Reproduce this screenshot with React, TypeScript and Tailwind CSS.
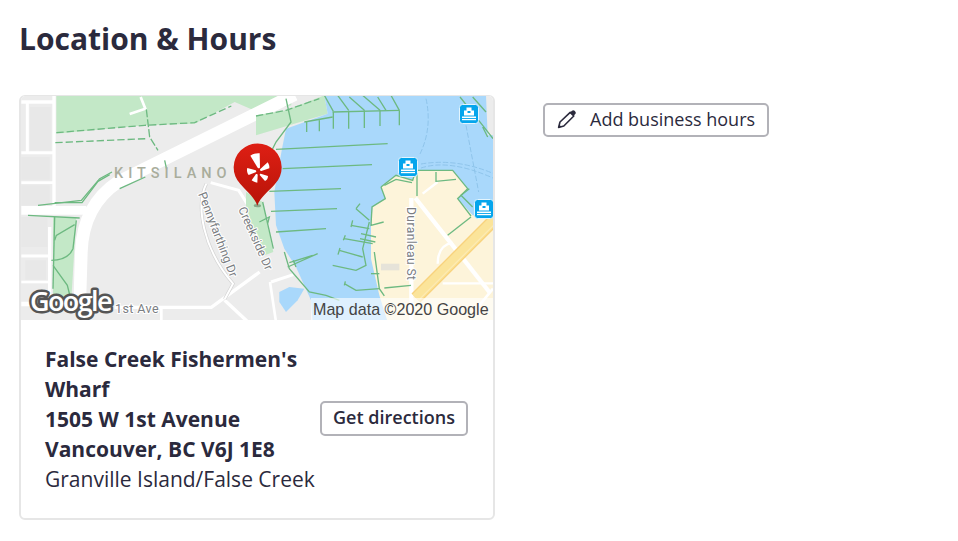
function MapArt() {
  const green = "#6db981";
  return (
    <svg viewBox="21 96 472 224" className="block h-[224px] w-[472px]" xmlns="http://www.w3.org/2000/svg">
      <rect x="20" y="96" width="473" height="224" fill="#ececec" />
      {/* West half */}
      <g transform="translate(18 92) scale(0.33333)" fill="none">
        <path d="M115 10 H820 V40 L720 60 L650 30 L530 95 L380 100 L115 125 Z" fill="#c3e8c7" />
        <path d="M105 375 H175 L160 620 H105 Z" fill="#c3e8c7" />
        <rect x="36" y="45" width="62" height="130" fill="#e8e8e8" />
        <rect x="10" y="195" width="85" height="68" fill="#e8e8e8" />
        <rect x="10" y="280" width="85" height="60" fill="#e8e8e8" />
        <rect x="10" y="375" width="78" height="90" fill="#e8e8e8" />
        <rect x="22" y="505" width="62" height="58" fill="#e8e8e8" />
        <g stroke="#ffffff">
          <path d="M108 10 V345" strokeWidth="10" />
          <path d="M95 405 V640" strokeWidth="10" />
          <path d="M10 30 H108" strokeWidth="11" />
          <path d="M28 30 V180" strokeWidth="9" />
          <path d="M10 182 H105" strokeWidth="9" />
          <path d="M10 272 H105" strokeWidth="8" />
          <path d="M10 492 H95" strokeWidth="9" />
          <path d="M10 570 H95" strokeWidth="8" />
          <path d="M10 355 H205" strokeWidth="26" />
          <path d="M10 636 H200" strokeWidth="13" />
          <path d="M830 8 L300 270 Q195 340 190 480 L185 640" strokeWidth="38" />
          <path d="M290 646 H580 L725 540" strokeWidth="10" />
          <path d="M578 272 L662 295 L700 355" strokeWidth="9" />
          <path d="M335 66 L382 50 L368 15" strokeWidth="8" />
          <path d="M620 625 L690 690" strokeWidth="10" />
          <path d="M430 650 V690" strokeWidth="8" />
        </g>
        <path d="M565 275 C532 340 555 470 645 575 L620 622" stroke="#d3d3d3" strokeWidth="10" />
        <path d="M565 275 C532 340 555 470 645 575 L620 622" stroke="#ffffff" strokeWidth="6" />
        <g stroke={green} strokeWidth="4">
          <path d="M115 122 L380 100 L530 92 L640 42" strokeDasharray="22 9" />
          <path d="M112 152 L385 140" strokeDasharray="22 9" />
          <path d="M385 52 L395 135 L420 175" strokeDasharray="24 6" />
          <path d="M440 205 L446 232" />
          <path d="M282 240 L245 260 L190 325 L60 340" />
          <path d="M275 248 L240 268 L192 332 L110 332" />
          <path d="M305 290 L382 255" />
          <path d="M30 370 L185 378" />
          <path d="M110 375 L105 590" />
          <path d="M175 385 L165 470 Q150 505 100 505" />
          <path d="M170 398 L115 430 L110 445" />
          <path d="M105 520 L148 580 L156 612" />
        </g>
      </g>
      {/* East half */}
      <g transform="translate(256 92) scale(0.33333)" fill="none">
        <path d="M0 70 L90 55 L205 10 L215 65 L100 100 L0 130 Z" fill="#c3e8c7" />
        <path d="M-30 300 L20 330 L52 480 L20 492 L0 440 L-30 370 Z" fill="#c3e8c7" />
        <path d="M205 10 H690 L695 130 H711 V420 L660 690 H170 L165 625 L120 525 L85 470 L60 400 L55 300 L78 170 L90 110 L215 65 Z" fill="#a9d8fb" />
        <path d="M70 600 L100 585 L145 590 L125 625 L90 660 L70 630 Z" fill="#a9d8fb" />
        <path d="M420 250 L470 265 L480 235 L590 235 L635 290 L605 320 L650 370 L711 380 V690 H395 L370 610 L345 500 L345 400 L350 345 L388 320 L375 285 Z" fill="#fdf4da" />
        <rect x="375" y="515" width="55" height="20" fill="#e6e3d9" />
        <g stroke="#ffffff">
          <path d="M478 318 L700 600" strokeWidth="13" />
          <path d="M466 318 V690" strokeWidth="13" />
          <path d="M500 305 L545 270" strokeWidth="7" />
          <path d="M545 515 Q545 460 590 452" strokeWidth="7" />
          <path d="M560 574 H711" strokeWidth="7" />
          <path d="M45 570 L112 548" strokeWidth="9" />
          <path d="M42 570 L60 690" strokeWidth="8" />
          <path d="M711 590 L670 640" strokeWidth="8" />
        </g>
        <path d="M720 378 L480 618" stroke="#f8d27c" strokeWidth="38" />
        <path d="M720 378 L480 618" stroke="#fbe49a" strokeWidth="30" />
        <path d="M720 392 L492 620" stroke="#fdf2d5" strokeWidth="2" />
        <g stroke="#8fc4ea" strokeWidth="3" strokeDasharray="16 6">
          <path d="M510 20 Q530 110 490 190" />
          <path d="M630 100 L668 300" />
          <path d="M495 228 Q580 200 711 258" />
          <path d="M495 216 Q600 198 711 244" />
        </g>
        <g stroke={green} strokeWidth="4">
          <path d="M230 60 L430 55" />
          <path d="M232 60 V110 M278 56 V110 M325 55 V108 M372 55 V102 M430 55 V100" />
          <path d="M205 10 L232 58 M245 10 L278 55 M280 15 L325 55 M320 10 L372 55 M365 15 L390 55 M405 10 L430 55" />
          <path d="M145 90 L230 75 M152 90 V120 M190 82 V118" />
          <path d="M60 172 L395 155 M80 230 L348 218 M40 298 L255 290 M45 358 L243 350 M60 420 L210 410" />
          <path d="M90 20 L105 90 L60 150 L45 180" />
          <path d="M0 72 L90 55 L190 20" strokeDasharray="22 8" />
          <path d="M20 330 L52 470 M10 390 L40 375 L35 395" />
          <path d="M85 480 L100 530 L160 600 L210 610 L250 625" />
          <path d="M95 525 L185 485 M100 512 L170 490 M120 525 L112 505" />
          <path d="M300 350 L340 385 M312 335 L300 350 M285 400 L340 410 M290 385 L285 405 M265 440 L350 455 M268 430 L262 445" />
          <path d="M315 425 L360 435 M312 440 L358 450" />
          <path d="M250 475 L320 495 M252 468 L246 488 M230 520 L300 535 L330 520 L320 470 L340 390" />
          <path d="M265 575 L300 595 L370 590 M268 568 L265 580" />
          <path d="M345 545 H370" />
          <path d="M375 285 L420 250 L470 265 L480 235 L590 235 L635 290 L605 320 L645 372" />
          <path d="M385 280 L420 262 L468 272" />
          <path d="M483 235 V312" />
          <path d="M375 285 L388 320 L348 345 L345 400 L383 390" />
          <path d="M355 480 L370 590 L385 612" />
          <path d="M385 588 L465 580" />
          <path d="M575 430 L645 375" />
          <path d="M540 240 V268 L600 262" />
          <path d="M650 345 L615 310 L640 290" />
          <path d="M612 15 L680 100 L711 140 M650 15 L690 60 M680 105 L695 135" />
        </g>
      </g>
      {/* Ferry icons */}
      {[[469, 114], [408, 167], [484, 209]].map(([x, y]) => (
        <g key={x} transform={`translate(${x} ${y})`}>
          <rect x="-9.5" y="-9.5" width="19" height="19" rx="3" fill="#05a5ec" stroke="#e3f5fe" strokeWidth="1" />
          <path d="M-2.5 -6.5 H2.5 V-3.5 H5 V1.5 H-5 V-3.5 H-2.5 Z" fill="#ffffff" />
          <rect x="-1.5" y="-3" width="3" height="2" fill="#05a5ec" />
          <rect x="-7" y="2.5" width="14" height="1.6" fill="#ffffff" />
          <rect x="-7" y="5" width="14" height="1.2" fill="#ffffff" />
        </g>
      ))}
      {/* Labels */}
      <text x="114" y="178" fontFamily="Roboto, sans-serif" fontSize="14.5" letterSpacing="5" fill="#a9ad9c" fontWeight="500">KITSILANO</text>
      <g fontFamily="Roboto, sans-serif" fontSize="12" fill="#7a7d82">
        <text transform="translate(198 194) rotate(69)" stroke="#ffffff" strokeWidth="2" paintOrder="stroke">Pennyfarthing Dr</text>
        <text transform="translate(238 209) rotate(66)" stroke="#ffffff" strokeWidth="2" paintOrder="stroke">Creekside Dr</text>
        <text transform="translate(407 207) rotate(90)" stroke="#ffffff" strokeWidth="2" paintOrder="stroke" letterSpacing="0.45">Duranleau St</text>
      </g>
      {/* Attribution */}
      <rect x="311" y="298" width="182" height="22" fill="#ffffff" fillOpacity="0.62" />
      <text x="313" y="314.5" fontFamily="'Liberation Sans', Arial, sans-serif" fontSize="16.1" fill="#444444">Map data ©2020 Google</text>
      {/* Google logo */}
      <text x="30" y="311" fontFamily="'Open Sans', sans-serif" fontSize="27" fontWeight="600" letterSpacing="-1.6" fill="#ffffff" stroke="#555555" strokeWidth="5" paintOrder="stroke" strokeLinejoin="round">Google</text>
      <text x="115" y="313" fontFamily="Roboto, sans-serif" fontSize="12.5" letterSpacing="0.4" fill="#7a7d82" stroke="#ffffff" strokeWidth="2" paintOrder="stroke">1st Ave</text>
      {/* Pin */}
      <g transform="translate(225 135) scale(0.33333)">
        <defs>
          <linearGradient id="pinfill" x1="0" y1="0" x2="0" y2="1">
            <stop offset="0" stopColor="#de1f14" />
            <stop offset="1" stopColor="#b81408" />
          </linearGradient>
        </defs>
        <ellipse cx="97" cy="212" rx="11" ry="5" fill="#5f7f5f" fillOpacity="0.6" />
        <path d="M97 212 C90 188 62 166 46 147 A72 72 0 1 1 150 147 C134 166 104 188 97 212 Z" fill="url(#pinfill)" />
        <g fill="#ffffff">
          <path d="M76 62 C82 56 96 54 104 55 L105 96 C105 100 101 101 98 98 Z" />
          <path d="M67 99 L92 106 C95 108 94 111 92 112 L71 120 C66 115 65 105 67 99 Z" />
          <path d="M128 82 C132 88 134 94 133 100 L109 108 C105 108 104 104 106 102 Z" />
          <path d="M93 117 C96 116 98 118 98 120 L97 143 C91 143 85 140 80 136 Z" />
          <path d="M107 116 L129 123 C129 130 125 136 120 138 L104 120 C104 118 105 116 107 116 Z" />
        </g>
      </g>
    </svg>
  );
}

function PencilIcon() {
  return (
    <svg viewBox="0 0 20 20" className="h-5 w-5" fill="none" xmlns="http://www.w3.org/2000/svg">
      <path d="M1.6 18.4 L3 13 L13.2 3.4 L16.8 7 L6.8 17 Z" stroke="#2b2a3d" strokeWidth="1.6" strokeLinejoin="round" />
      <path d="M13 3.6 L15 1.7 C15.8 1 16.8 1 17.6 1.8 L18.2 2.4 C19 3.2 19 4.2 18.3 5 L16.6 6.8 Z" fill="#2b2a3d" />
      <path d="M1.4 18.6 L2.2 15.6 L4.4 17.8 Z" fill="#2b2a3d" />
    </svg>
  );
}

export default function App() {
  return (
    <div className="min-h-[541px] bg-white pl-[19px] pt-[18px] font-['Open_Sans',sans-serif] text-[#2b2a3d]">
      <h2 className="text-[30px] font-bold leading-[42px]">Location &amp; Hours</h2>
      <div className="mt-[35px] flex items-start gap-12">
        <div className="w-[476px] overflow-hidden rounded-md border-2 border-[#e6e6e6] border-t-[1px]">
          <MapArt />
          <div className="flex items-center pl-[24px] pr-[25px] pb-[24px] pt-[24px]">
            <div className="w-[275px] text-[21px] leading-[30px]">
              <div className="font-bold">False Creek Fishermen's Wharf</div>
              <div className="font-bold">1505 W 1st Avenue</div>
              <div className="font-bold">Vancouver, BC V6J 1E8</div>
              <div>Granville Island/False Creek</div>
            </div>
            <button className="mb-[2px] h-[35px] w-[148px] rounded-[5px] border-2 border-[#b2b2b8] bg-white pb-[2px] text-[18px] font-semibold leading-none">
              Get directions
            </button>
          </div>
        </div>
        <button className="mt-2 flex h-[34px] w-[226px] items-center rounded-[5px] border-2 border-[#b2b2b8] bg-white pb-[2px] pl-[12px] text-[18px] leading-none">
          <PencilIcon />
          <span className="ml-[13px]">Add business hours</span>
        </button>
      </div>
    </div>
  );
}
